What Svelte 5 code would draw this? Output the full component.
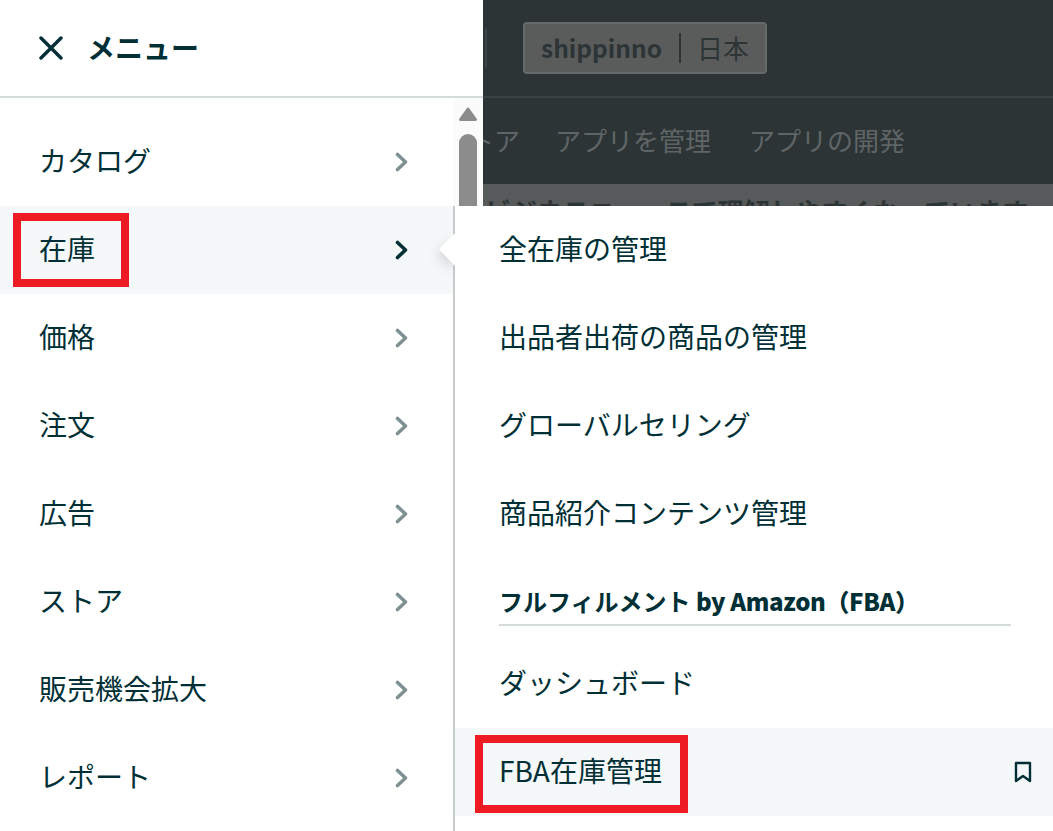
<script lang="ts">
	const mainItems = ['カタログ', '在庫', '価格', '注文', '広告', 'ストア', '販売機会拡大', 'レポート'];
	const activeMain = '在庫';
	const subItems = ['全在庫の管理', '出品者出荷の商品の管理', 'グローバルセリング', '商品紹介コンテンツ管理'];
</script>

<div class="page">
	<div class="backdrop">
		<div class="topbar">
			<span class="divider"></span>
			<div class="account">
				<span class="store">shippinno</span>
				<span class="region">日本</span>
			</div>
		</div>
		<div class="subnav">
			<span class="cut">トア</span>
			<span>アプリを管理</span>
			<span>アプリの開発</span>
		</div>
		<div class="notice">ビジネスニュースで理解しやすくなっています</div>
	</div>

	<div class="drawer">
		<header class="drawer-head">
			<svg class="close" viewBox="0 0 24 24" width="24" height="24" aria-hidden="true">
				<path d="M2 2 L22 22 M22 2 L2 22" fill="none" stroke="currentColor" stroke-width="3.4" stroke-linecap="round" />
			</svg>
			<h1>メニュー</h1>
		</header>
		<div class="drawer-body">
			<ul class="main-list">
				{#each mainItems as item (item)}
					<li class="main-item" class:active={item === activeMain}>
						<span class="label">{item}</span>
						<svg class="chevron" viewBox="0 0 14 20" width="14" height="20" aria-hidden="true">
							<path d="M2.5 2.5 L10.5 10 L2.5 17.5" fill="none" stroke="currentColor" stroke-width="3.6" stroke-linecap="round" stroke-linejoin="round" />
						</svg>
					</li>
				{/each}
			</ul>
			<div class="scrollbar">
				<svg class="arrow" viewBox="0 0 18 14" width="18" height="14" aria-hidden="true">
					<path d="M9 2 L16.5 12.5 H1.5 Z" fill="#8c8c8c" stroke="#8c8c8c" stroke-width="3" stroke-linejoin="round" />
				</svg>
				<span class="thumb"></span>
			</div>
		</div>
	</div>

	<div class="submenu">
		<svg class="notch" viewBox="0 0 16 32" width="16" height="32" aria-hidden="true">
			<path d="M0 15 L15 0 H16 V32 H16 Z" fill="#fff" />
		</svg>
		<ul>
			{#each subItems as item (item)}
				<li class="sub-item"><span class="label">{item}</span></li>
			{/each}
			<li class="sub-title"><span>フルフィルメント <b class="latin">by Amazon（FBA）</b></span></li>
			<li class="sub-item"><span class="label">ダッシュボード</span></li>
			<li class="sub-item active">
				<span class="label">FBA在庫管理</span>
				<svg class="bookmark" viewBox="0 0 18 22" width="18" height="22" aria-hidden="true">
					<path d="M2 2 H16 V20 L9 15 L2 20 Z" fill="none" stroke="currentColor" stroke-width="2.4" stroke-linejoin="round" />
				</svg>
			</li>
		</ul>
	</div>

	<span class="mark mark-stock"></span>
	<span class="mark mark-fba"></span>
</div>

<style>
	:global(body) {
		margin: 0;
	}

	.page {
		position: relative;
		width: 1053px;
		height: 831px;
		overflow: hidden;
		background: #2d3436;
		color: #002f36;
		font-family: 'Noto Sans CJK JP', 'Noto Sans', sans-serif;
	}

	ul {
		list-style: none;
		margin: 0;
		padding: 0;
	}

	.label {
		margin-bottom: 4px;
	}

	/* dimmed page behind the drawer */
	.backdrop {
		margin-left: 483px;
		color: #5f6566;
	}

	.topbar {
		height: 96px;
		display: flex;
		align-items: center;
		gap: 37px;
		border-bottom: 2px solid #3c4244;
	}

	.divider {
		width: 2px;
		height: 40px;
		margin-left: 2px;
		background: #3c4244;
	}

	.account {
		display: flex;
		align-items: center;
		width: 244px;
		height: 52px;
		box-sizing: border-box;
		margin-left: -1px;
		margin-top: -1px;
		background: #5a5c5c;
		border: 2px solid #666a6a;
		border-radius: 4px;
		color: #2d3436;
		font-size: 24.5px;
	}

	.store {
		font-weight: 700;
		padding: 0 17px 0 16px;
		line-height: 30px;
		border-right: 2px solid #2d3436;
	}

	.region {
		padding-left: 16px;
		font-size: 26px;
		line-height: 30px;
	}

	.subnav {
		height: 86px;
		padding-bottom: 4px;
		box-sizing: border-box;
		display: flex;
		align-items: center;
		gap: 38px;
		font-size: 26px;
		margin-left: -15px;
	}

	.cut {
		margin-right: -3px;
	}

	.notice {
		height: 60px;
		background: #575a5a;
		color: #2d3436;
		font-size: 26px;
		font-weight: 700;
		padding-left: 2px;
		line-height: 54px;
		white-space: nowrap;
		overflow: hidden;
	}

	/* left drawer */
	.drawer {
		position: absolute;
		left: 0;
		top: 0;
		bottom: 0;
		width: 483px;
		background: #fff;
	}

	.drawer-head {
		height: 96px;
		display: flex;
		align-items: center;
		gap: 25px;
		padding-left: 39px;
		border-bottom: 2px solid #d5dbdb;
	}

	.close {
		flex: none;
	}

	h1 {
		margin: 0 0 2px -1px;
		font-size: 28px;
		font-weight: 700;
		line-height: 1;
	}

	.drawer-body {
		display: flex;
	}

	.main-list {
		width: 453px;
		padding-top: 20px;
	}

	.main-item {
		height: 88px;
		display: flex;
		align-items: center;
		justify-content: space-between;
		padding: 0 44px 0 39px;
		font-size: 28px;
	}

	.main-item .chevron {
		color: #7f9192;
	}

	.main-item.active {
		background: #f4f8f8;
	}

	.main-item.active .chevron {
		color: #002f36;
	}

	.scrollbar {
		width: 30px;
		background: #fbfbfb;
		display: flex;
		flex-direction: column;
		align-items: center;
		padding-top: 9px;
		gap: 13px;
	}

	.thumb {
		width: 18px;
		height: 300px;
		border-radius: 9px;
		background: #8c8c8c;
	}

	/* flyout panel */
	.submenu {
		position: absolute;
		left: 453px;
		top: 206px;
		right: 0;
		bottom: 0;
		background: #fff;
		border-left: 2px solid #c8cccc;
	}

	.notch {
		position: absolute;
		left: -16px;
		top: 28px;
		filter: drop-shadow(-2px 5px 6px rgba(0, 0, 0, 0.14));
		clip-path: inset(-14px 0 -14px -14px);
	}

	.sub-item {
		height: 88px;
		display: flex;
		align-items: center;
		justify-content: space-between;
		padding: 0 21px 0 44px;
		font-size: 28px;
	}

	.sub-item.active {
		background: #f4f8f8;
	}

	.sub-title {
		height: 82px;
		padding: 0 42px 0 44px;
		font-size: 24px;
		font-weight: 700;
	}

	.sub-title span {
		display: block;
		height: 68px;
		padding-top: 25px;
		line-height: 36px;
		box-sizing: border-box;
		border-bottom: 2px solid #d5dbdb;
	}

	.latin {
		letter-spacing: -0.4px;
	}

	.bookmark {
		color: #002f36;
	}

	/* red annotation boxes */
	.mark {
		position: absolute;
		box-sizing: border-box;
		border: 8px solid #ed1c24;
	}

	.mark-stock {
		left: 13px;
		top: 213px;
		width: 116px;
		height: 74px;
	}

	.mark-fba {
		left: 475px;
		top: 735px;
		width: 213px;
		height: 78px;
	}
</style>
